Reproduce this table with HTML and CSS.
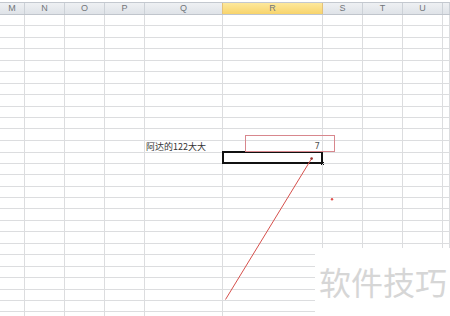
FILE: index.html
```html
<!DOCTYPE html>
<html lang="zh">
<head>
<meta charset="utf-8">
<title>Sheet</title>
<link rel="stylesheet" href="styles.css">
</head>
<body>
<div class="sheet">
  <div class="head">
    <span>M</span><span>N</span><span>O</span><span>P</span><span>Q</span><span class="on">R</span><span>S</span><span>T</span><span>U</span><span></span>
  </div>
  <div class="body">
    <div class="row"><span></span><span></span><span></span><span></span><span></span><span></span><span></span><span></span><span></span><span></span></div>
    <div class="row"><span></span><span></span><span></span><span></span><span></span><span></span><span></span><span></span><span></span><span></span></div>
    <div class="row"><span></span><span></span><span></span><span></span><span></span><span></span><span></span><span></span><span></span><span></span></div>
    <div class="row"><span></span><span></span><span></span><span></span><span></span><span></span><span></span><span></span><span></span><span></span></div>
    <div class="row"><span></span><span></span><span></span><span></span><span></span><span></span><span></span><span></span><span></span><span></span></div>
    <div class="row"><span></span><span></span><span></span><span></span><span></span><span></span><span></span><span></span><span></span><span></span></div>
    <div class="row"><span></span><span></span><span></span><span></span><span></span><span></span><span></span><span></span><span></span><span></span></div>
    <div class="row"><span></span><span></span><span></span><span></span><span></span><span></span><span></span><span></span><span></span><span></span></div>
    <div class="row"><span></span><span></span><span></span><span></span><span></span><span></span><span></span><span></span><span></span><span></span></div>
    <div class="row"><span></span><span></span><span></span><span></span><span></span><span></span><span></span><span></span><span></span><span></span></div>
    <div class="row"><span></span><span></span><span></span><span></span><span></span><span></span><span></span><span></span><span></span><span></span></div>
    <div class="row"><span></span><span></span><span></span><span></span><span class="txt">阿达的122大大</span><span class="num">7</span><span></span><span></span><span></span><span></span></div>
    <div class="row"><span></span><span></span><span></span><span></span><span></span><span class="sel"><i class="handle"></i></span><span></span><span></span><span></span><span></span></div>
    <div class="row"><span></span><span></span><span></span><span></span><span></span><span></span><span></span><span></span><span></span><span></span></div>
    <div class="row"><span></span><span></span><span></span><span></span><span></span><span></span><span></span><span></span><span></span><span></span></div>
    <div class="row"><span></span><span></span><span></span><span></span><span></span><span></span><span></span><span></span><span></span><span></span></div>
    <div class="row"><span></span><span></span><span></span><span></span><span></span><span></span><span></span><span></span><span></span><span></span></div>
    <div class="row"><span></span><span></span><span></span><span></span><span></span><span></span><span></span><span></span><span></span><span></span></div>
    <div class="row"><span></span><span></span><span></span><span></span><span></span><span></span><span></span><span></span><span></span><span></span></div>
    <div class="row"><span></span><span></span><span></span><span></span><span></span><span></span><span></span><span></span><span></span><span></span></div>
    <div class="row"><span></span><span></span><span></span><span></span><span></span><span></span><span></span><span></span><span></span><span></span></div>
    <div class="row"><span></span><span></span><span></span><span></span><span></span><span></span><span></span><span></span><span></span><span></span></div>
    <div class="row"><span></span><span></span><span></span><span></span><span></span><span></span><span></span><span></span><span></span><span></span></div>
    <div class="row"><span></span><span></span><span></span><span></span><span></span><span></span><span></span><span></span><span></span><span></span></div>
    <div class="row"><span></span><span></span><span></span><span></span><span></span><span></span><span></span><span></span><span></span><span></span></div>
    <div class="row"><span></span><span></span><span></span><span></span><span></span><span></span><span></span><span></span><span></span><span></span></div>
    <div class="row"><span></span><span></span><span></span><span></span><span></span><span></span><span></span><span></span><span></span><span></span></div>
  </div>

  <svg class="marks" width="450" height="316" viewBox="0 0 450 316" aria-hidden="true">
    <rect x="245.5" y="135.5" width="89" height="16" fill="none" stroke="#d8878d" stroke-width="1"/>
    <line x1="225.5" y1="299.5" x2="311" y2="159.5" stroke="#d6504c" stroke-width="1"/>
    <circle cx="311.6" cy="158.6" r="1.3" fill="#9c3330"/>
    <circle cx="332" cy="199.3" r="1.2" fill="#e0504c"/>
  </svg>

  <div class="watermark">软件技巧</div>
</div>
</body>
</html>
```

FILE: styles.css
```css
html, body {
  margin: 0;
  padding: 0;
  background: #fff;
}

.sheet {
  position: relative;
  width: 450px;
  height: 316px;
  overflow: hidden;
  background: #fff;
  font-family: "Liberation Sans", "Noto Sans CJK SC", sans-serif;
}

.head,
.row {
  display: grid;
  grid-template-columns: 25px 40px 40px 40px 78px 100px 40px 40px 40px 1fr;
}

.head {
  margin-top: 2px;
  height: 11px;
  border-top: 1px solid #c3c8cf;
  border-bottom: 1px solid #c0c5cc;
  background: linear-gradient(#eef0f3, #dfe3e8);
}

.head span {
  border-right: 1px solid #ccd1d7;
  font-size: 9px;
  line-height: 11px;
  text-align: center;
  color: #72767a;
}

.head span.on {
  background: linear-gradient(#fde89c, #f8d46c);
  border-left: 1px solid #e4c27a;
  margin-left: -1px;
  border-right-color: #e4c27a;
}

.body {
  height: 301px;
  overflow: hidden;
}

.row {
  height: 11.44px;
}

.row span {
  position: relative;
  border-right: 1px solid #dcdddf;
  border-bottom: 1px solid #dcdddf;
  font-size: 9px;
  line-height: 10px;
  white-space: nowrap;
  color: #2a2a2a;
}

.row span.txt {
  font-family: "Noto Sans CJK SC", sans-serif;
  padding-left: 1px;
  line-height: 11px;
  color: #333;
}

.row span.num {
  text-align: right;
  padding-right: 2px;
  font-family: "DejaVu Sans", sans-serif;
  font-size: 8.5px;
  line-height: 11px;
  color: #555;
}

.row span.sel::before {
  content: "";
  position: absolute;
  left: -1px;
  top: -1px;
  right: -1px;
  bottom: -1px;
  border: 2px solid #111;
}

.handle {
  position: absolute;
  right: -2px;
  bottom: -2px;
  width: 3px;
  height: 3px;
  background: #111;
}

.marks {
  position: absolute;
  left: 0;
  top: 0;
  pointer-events: none;
}

.watermark {
  position: absolute;
  left: 315px;
  top: 248px;
  width: 135px;
  height: 68px;
  box-sizing: border-box;
  padding: 17px 0 0 4px;
  background: #fff;
  font-family: "Noto Sans CJK SC", sans-serif;
  font-size: 32px;
  line-height: 32px;
  color: #d6d6d6;
  white-space: nowrap;
}
```
